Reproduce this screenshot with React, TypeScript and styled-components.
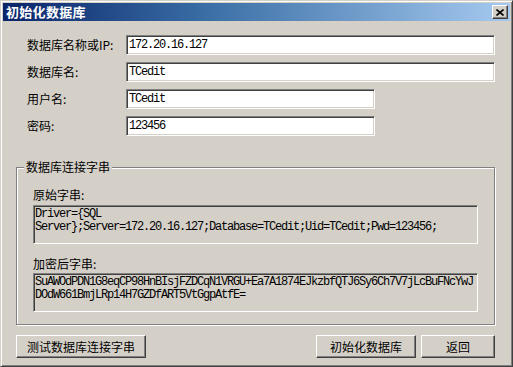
import React from 'react';
import styled, { createGlobalStyle } from 'styled-components';

const GlobalStyle = createGlobalStyle`
  html, body {
    margin: 0;
    padding: 0;
    background: #d4d0c8;
  }
  body {
    font-family: "Noto Sans CJK SC", "DejaVu Sans", sans-serif;
    font-size: 12px;
    color: #000;
  }
`;

const Window = styled.div`
  width: 513px;
  height: 367px;
  box-sizing: border-box;
  border: 1px solid;
  border-color: #d4d0c8 #404040 #404040 #d4d0c8;
  box-shadow: inset 1px 1px 0 #fff, inset -1px -1px 0 #808080;
  padding: 2px;
  background: #d4d0c8;
  display: flex;
  flex-direction: column;
`;

const TitleBar = styled.div`
  height: 18px;
  display: flex;
  align-items: center;
  justify-content: space-between;
  padding: 0 2px 0 3px;
  background: linear-gradient(to right, #0a246a 0%, #3a6ea5 40%, #a6caf0 100%);
`;

const Title = styled.span`
  color: #fff;
  font-weight: 700;
  font-size: 13px;
  line-height: 18px;
  letter-spacing: 0.3px;
`;

const CloseButton = styled.div`
  width: 16px;
  height: 14px;
  box-sizing: border-box;
  border: 1px solid;
  border-color: #fff #404040 #404040 #fff;
  box-shadow: inset -1px -1px 0 #808080;
  background: #d4d0c8;
  display: flex;
  align-items: center;
  justify-content: center;
`;

const Form = styled.div`
  display: grid;
  grid-template-columns: 99px 1fr;
  row-gap: 7px;
  padding: 14px 0 0 24px;
`;

const Label = styled.div`
  height: 20px;
  line-height: 20px;
  font-size: 12px;
`;

const Sunken = styled.div`
  box-sizing: border-box;
  border: 1px solid;
  border-color: #808080 #fff #fff #808080;
  box-shadow: inset 1px 1px 0 #404040, inset -1px -1px 0 #d4d0c8;
  font-family: "Liberation Mono", "DejaVu Sans Mono", monospace;
  font-size: 12px;
  letter-spacing: -1.2px;
`;

const Field = styled(Sunken)<{ $w: number }>`
  width: ${p => p.$w}px;
  height: 20px;
  background: #fff;
  padding: 0 2px;
  line-height: 18px;
  white-space: nowrap;
`;

const Group = styled.div`
  position: relative;
  margin: 31px 0 0 13px;
  width: 479px;
  height: 158px;
  box-sizing: border-box;
  border: 1px solid #808080;
  box-shadow: inset 1px 1px 0 #fff, 1px 1px 0 #fff;
  padding: 20px 16px 0 16px;
`;

const GroupTitle = styled.span`
  position: absolute;
  top: -8px;
  left: 7px;
  padding: 0 2px;
  line-height: 14px;
  background: #d4d0c8;
`;

const BoxLabel = styled.div<{ $gap: number }>`
  line-height: 14px;
  margin-bottom: ${p => p.$gap}px;
`;

const TextBox = styled(Sunken)<{ $breakAll?: boolean; $gap?: number }>`
  height: 39px;
  background: #d4d0c8;
  padding: 2px 0 0 1px;
  line-height: 13px;
  white-space: pre-wrap;
  word-break: ${p => (p.$breakAll ? 'break-all' : 'normal')};
  overflow-wrap: break-word;
  margin-bottom: ${p => p.$gap ?? 0}px;
  overflow: hidden;
`;

const ButtonRow = styled.div`
  display: flex;
  justify-content: space-between;
  margin: 10px 0 0 13px;
  width: 479px;
`;

const ButtonGroup = styled.div`
  display: flex;
  gap: 5px;
`;

const Button = styled.button<{ $w: number }>`
  width: ${p => p.$w}px;
  height: 23px;
  box-sizing: border-box;
  padding: 0;
  border: 1px solid;
  border-color: #fff #404040 #404040 #fff;
  box-shadow: inset -1px -1px 0 #808080, inset 1px 1px 0 #d4d0c8;
  background: #d4d0c8;
  font-family: "Noto Sans CJK SC", "DejaVu Sans", sans-serif;
  font-size: 12px;
  color: #000;
  line-height: 20px;
`;

const fields = [
  { label: '数据库名称或IP:', value: '172.20.16.127', w: 369 },
  { label: '数据库名:', value: 'TCedit', w: 369 },
  { label: '用户名:', value: 'TCedit', w: 249 },
  { label: '密码:', value: '123456', w: 249 },
];

const raw = 'Driver={SQL Server};Server=172.20.16.127;Database=TCedit;Uid=TCedit;Pwd=123456;';
const encrypted =
  'SuAWOdPDN1G8eqCP98HnBIsjFZDCqN1VRGU+Ea7A1874EJkzbfQTJ6Sy6Ch7V7jLcBuFNcYwJDOdW661BmjLRp14H7GZDfART5VtGgpAtfE=';

export default function App() {
  return (
    <>
      <GlobalStyle />
      <Window>
        <TitleBar>
          <Title>初始化数据库</Title>
          <CloseButton>
            <svg width="8" height="7" viewBox="0 0 8 7">
              <path d="M0.5 0.5 L7.5 6.5 M7.5 0.5 L0.5 6.5" stroke="#000" strokeWidth="1.6" />
            </svg>
          </CloseButton>
        </TitleBar>

        <Form>
          {fields.map(f => (
            <React.Fragment key={f.label}>
              <Label>{f.label}</Label>
              <Field $w={f.w}>{f.value}</Field>
            </React.Fragment>
          ))}
        </Form>

        <Group>
          <GroupTitle>数据库连接字串</GroupTitle>
          <BoxLabel $gap={3}>原始字串:</BoxLabel>
          <TextBox $gap={13}>{raw}</TextBox>
          <BoxLabel $gap={2}>加密后字串:</BoxLabel>
          <TextBox $breakAll>{encrypted}</TextBox>
        </Group>

        <ButtonRow>
          <Button $w={130}>测试数据库连接字串</Button>
          <ButtonGroup>
            <Button $w={100}>初始化数据库</Button>
            <Button $w={74}>返回</Button>
          </ButtonGroup>
        </ButtonRow>
      </Window>
    </>
  );
}
